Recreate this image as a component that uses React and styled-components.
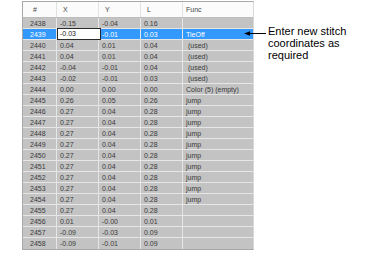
import React from 'react';
import styled, { createGlobalStyle } from 'styled-components';

const GlobalStyle = createGlobalStyle`
	html, body {
		margin: 0;
		padding: 0;
		background: #ffffff;
	}
`;

const rows = [
	[2438, '-0.15', '-0.04', '0.16', ''],
	[2439, '-0.03', '-0.01', '0.03', 'TieOff'],
	[2440, '0.04', '0.01', '0.04', ' (used)'],
	[2441, '0.04', '0.01', '0.04', ' (used)'],
	[2442, '-0.04', '-0.01', '0.04', ' (used)'],
	[2443, '-0.02', '-0.01', '0.03', ' (used)'],
	[2444, '0.00', '0.00', '0.00', 'Color (5) (empty)'],
	[2445, '0.26', '0.05', '0.26', 'jump'],
	[2446, '0.27', '0.04', '0.28', 'jump'],
	[2447, '0.27', '0.04', '0.28', 'jump'],
	[2448, '0.27', '0.04', '0.28', 'jump'],
	[2449, '0.27', '0.04', '0.28', 'jump'],
	[2450, '0.27', '0.04', '0.28', 'jump'],
	[2451, '0.27', '0.04', '0.28', 'jump'],
	[2452, '0.27', '0.04', '0.28', 'jump'],
	[2453, '0.27', '0.04', '0.28', 'jump'],
	[2454, '0.27', '0.04', '0.28', 'jump'],
	[2455, '0.27', '0.04', '0.28', ''],
	[2456, '0.01', '-0.00', '0.01', ''],
	[2457, '-0.09', '-0.03', '0.09', ''],
	[2458, '-0.09', '-0.01', '0.09', ''],
];

const SELECTED = 2439;

export default function App() {
	return (
		<Page>
			<GlobalStyle />
			<Table>
				<HeadRow>
					<HeadCell>#</HeadCell>
					<HeadCell>X</HeadCell>
					<HeadCell>Y</HeadCell>
					<HeadCell>L</HeadCell>
					<HeadCell $last>Func</HeadCell>
				</HeadRow>
				{rows.map(([n, x, y, l, f]) => {
					const sel = n === SELECTED;
					return (
						<Row key={n}>
							<Cell $sel={sel}>{n}</Cell>
							{sel ? (
								<EditCell>
									<EditBox>{x}</EditBox>
								</EditCell>
							) : (
								<Cell>{x}</Cell>
							)}
							<Cell $sel={sel}>{y}</Cell>
							<Cell $sel={sel}>{l}</Cell>
							<Cell $sel={sel} $last>
								{f}
							</Cell>
						</Row>
					);
				})}
			</Table>
			<Callout>
				<svg width="22" height="7" viewBox="0 0 22 7">
					<line x1="3" y1="3.5" x2="22" y2="3.5" stroke="#000" strokeWidth="1" />
					<path d="M0 3.5 L6 1.2 L6 5.8 Z" fill="#000" />
				</svg>
				<Note>
					Enter new stitch
					<br />
					coordinates as
					<br />
					required
				</Note>
			</Callout>
		</Page>
	);
}

const Page = styled.div`
	display: flex;
	align-items: flex-start;
	padding: 1px 0 0 22px;
	font-family: 'Liberation Sans', Arial, sans-serif;
`;

const Table = styled.div`
	width: 230px;
	border: 1px solid #a8a8a8;
	border-right-color: #d8d8d8;
	background: #c3c3c3;
`;

const HeadRow = styled.div`
	display: grid;
	grid-template-columns: 34px 42px 42px 42px 1fr;
	height: 15px;
	background: #fbfbfb;
	border-bottom: 1px solid #bdbdbd;
`;

const HeadCell = styled.div`
	display: flex;
	align-items: center;
	padding-left: ${(p) => (p.$last ? '3px' : '6px')};
	font-size: 7px;
	color: #444;
	border-right: ${(p) => (p.$last ? 'none' : '1px solid #e2e2e2')};
	&:first-child {
		padding-left: 10px;
	}
`;

const Row = styled.div`
	display: grid;
	grid-template-columns: 34px 42px 42px 42px 1fr;
	height: 10px;
	border-bottom: 1px solid #e6e6e6;
	&:last-child {
		border-bottom: none;
		height: 11px;
	}
`;

const Cell = styled.div`
	display: flex;
	align-items: center;
	padding-left: 3px;
	font-size: 7px;
	white-space: pre;
	color: ${(p) => (p.$sel ? '#ffffff' : '#3a3a3a')};
	background: ${(p) => (p.$sel ? '#3399ff' : 'transparent')};
	border-right: ${(p) => (p.$last ? 'none' : '1px solid #e6e6e6')};
	&:first-child {
		padding-left: 7px;
	}
`;

const EditCell = styled.div`
	position: relative;
	border-right: 1px solid #e6e6e6;
`;

const EditBox = styled.div`
	position: absolute;
	left: 0;
	top: -1px;
	width: 44px;
	height: 12px;
	box-sizing: border-box;
	border: 1px solid #2a2a2a;
	background: #ffffff;
	padding-left: 2px;
	font-size: 7px;
	line-height: 10px;
	color: #1a1a1a;
	z-index: 1;
`;

const Callout = styled.div`
	display: flex;
	align-items: flex-start;
	margin-top: 29px;
	margin-left: -10px;
`;

const Note = styled.div`
	margin-left: 2px;
	margin-top: -5px;
	font-size: 11px;
	line-height: 12px;
	color: #000;
`;
